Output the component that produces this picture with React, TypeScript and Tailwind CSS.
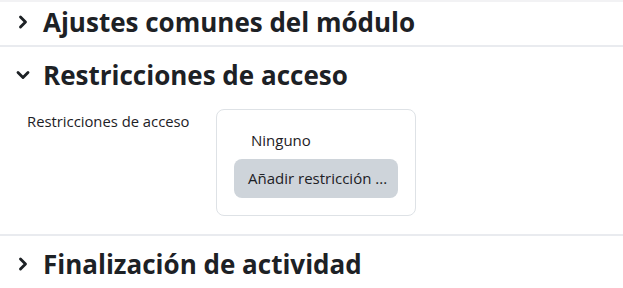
import { ChevronRight, ChevronDown } from "lucide-react";

function SectionHeader({ title, open }: { title: string; open?: boolean }) {
  return (
    <div className="flex items-center h-[40px]">
      <span className="w-[43px] flex justify-center pl-[2px] text-[#1d2125]">
        {open ? (
          <ChevronDown size={20} strokeWidth={3.4} />
        ) : (
          <ChevronRight size={20} strokeWidth={3.4} />
        )}
      </span>
      <h3 className="text-[26px] font-bold text-[#1d2125] leading-none">
        {title}
      </h3>
    </div>
  );
}

export default function App() {
  return (
    <div
      className="w-[623px] h-[288px] bg-white overflow-hidden"
      style={{ fontFamily: '"Open Sans", "Noto Sans", sans-serif' }}
    >
      <div className="border-t-2 border-[#f2f2f4] pb-[3px]">
        <SectionHeader title="Ajustes comunes del módulo" />
      </div>
      <div className="border-t-2 border-[#e9ebef]">
        <div className="pt-[8px]">
          <SectionHeader title="Restricciones de acceso" open />
        </div>
        <div className="flex pt-[14px] pb-[18px]">
          <div className="w-[216px] pl-[27px] pt-[1px] text-[14.8px] text-[#1d2125]">
            Restricciones de acceso
          </div>
          <div className="w-[200px] h-[107px] border border-[#dee2e6] rounded-[8px] px-[17px] pt-[20px]">
            <div className="pl-[17px] text-[15px] text-[#1d2125] leading-[20px]">Ninguno</div>
            <button className="mt-[9px] w-[164px] h-[39px] bg-[#ced4da] rounded-[8px] text-left pl-[14px] text-[15px] text-[#1d2125]">
              Añadir restricción ...
            </button>
          </div>
        </div>
      </div>
      <div className="border-t-2 border-[#e9ebef]">
        <div className="pt-[8px]">
          <SectionHeader title="Finalización de actividad" />
        </div>
      </div>
    </div>
  );
}
